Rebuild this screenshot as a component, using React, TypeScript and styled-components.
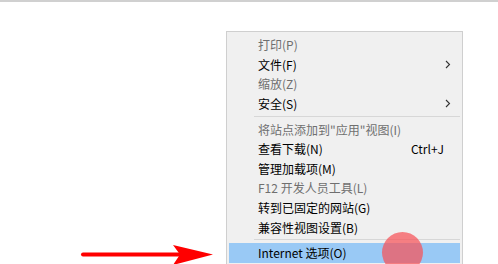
import React from 'react';
import styled, { createGlobalStyle } from 'styled-components';

const Global = createGlobalStyle`
  html, body {
    margin: 0;
    padding: 0;
    background: #ffffff;
  }
  body {
    width: 498px;
    height: 264px;
    overflow: hidden;
    font-family: "Noto Sans CJK SC", "Noto Sans", sans-serif;
  }
`;

const Page = styled.div`
  position: relative;
  width: 498px;
  height: 264px;
  border-top: 2px solid #d0d0d0;
  box-sizing: border-box;
  overflow: hidden;
  padding: 29px 0 0 226px;
`;

const Menu = styled.div`
  width: 237px;
  box-sizing: border-box;
  background: #f0f0f0;
  border: 1px solid #cfcfcf;
  padding: 3px 2px;
  display: flex;
  flex-direction: column;
`;

const Row = styled.div<{ $disabled?: boolean; $active?: boolean }>`
  height: 19.6px;
  display: flex;
  align-items: center;
  padding-left: 29px;
  padding-right: 8px;
  font-size: 12px;
  color: ${p => (p.$disabled ? '#6f6f6f' : '#000000')};
  background: ${p => (p.$active ? '#99c9f5' : 'transparent')};
`;

const Label = styled.span`
  flex: 1;
  white-space: nowrap;
`;

const Shortcut = styled.span`
  margin-right: 8px;
`;

const Chevron = styled.svg`
  width: 6px;
  height: 9px;
  margin-right: 1px;
`;

const Separator = styled.div`
  height: 6px;
  display: flex;
  align-items: center;
  padding-left: 25px;
  &::after {
    content: '';
    flex: 1;
    height: 1px;
    background: #d7d7d7;
  }
`;

const Marker = styled.div`
  position: absolute;
  left: 382px;
  top: 230px;
  width: 41px;
  height: 41px;
  border-radius: 50%;
  background: rgba(246, 82, 88, 0.72);
`;

const Arrow = styled.svg`
  position: absolute;
  left: 80px;
  top: 240px;
`;

const Sub = () => (
  <Chevron viewBox="0 0 6 9">
    <path d="M1 1 L4.5 4.5 L1 8" fill="none" stroke="#333" strokeWidth="1.1" />
  </Chevron>
);

type Item =
  | { sep: true }
  | { sep?: false; label: string; disabled?: boolean; sub?: boolean; shortcut?: string; active?: boolean };

const items: Item[] = [
  { label: '打印(P)', disabled: true },
  { label: '文件(F)', sub: true },
  { label: '缩放(Z)', disabled: true },
  { label: '安全(S)', sub: true },
  { sep: true },
  { label: '将站点添加到"应用"视图(I)', disabled: true },
  { label: '查看下载(N)', shortcut: 'Ctrl+J' },
  { label: '管理加载项(M)' },
  { label: 'F12 开发人员工具(L)', disabled: true },
  { label: '转到已固定的网站(G)' },
  { label: '兼容性视图设置(B)' },
  { sep: true },
  { label: 'Internet 选项(O)', active: true },
];

export default function App() {
  return (
    <>
      <Global />
      <Page>
        <Menu>
          {items.map((it, i) =>
            it.sep ? (
              <Separator key={i} />
            ) : (
              <Row key={i} $disabled={it.disabled} $active={it.active}>
                <Label>{it.label}</Label>
                {it.shortcut && <Shortcut>{it.shortcut}</Shortcut>}
                {it.sub && <Sub />}
              </Row>
            )
          )}
        </Menu>
        <Marker />
        <Arrow width="136" height="26" viewBox="0 0 136 26">
          <path d="M3 12.5 H100" stroke="#ff0000" strokeWidth="4" strokeLinecap="round" />
          <path d="M93 3 L133 12.5 L93 23 L100 12.5 Z" fill="#ff0000" />
        </Arrow>
      </Page>
    </>
  );
}
